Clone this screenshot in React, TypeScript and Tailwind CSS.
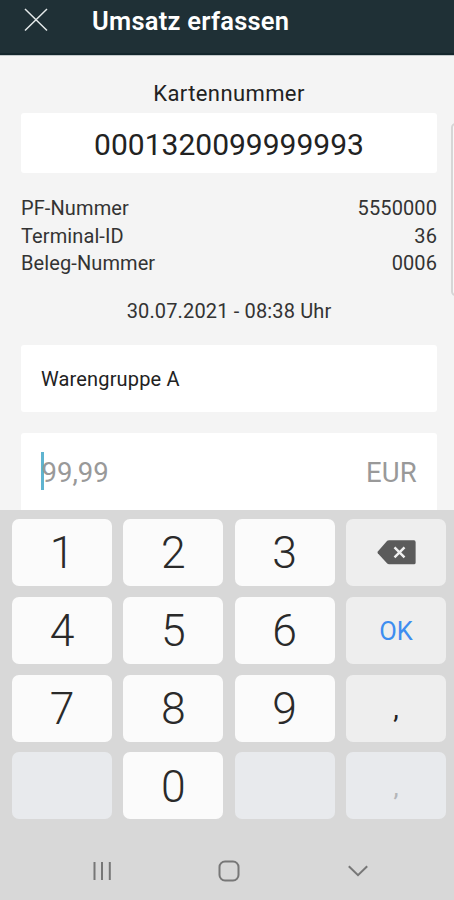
import clsx from "clsx";

type DetailRowProps = {
  label: string;
  value: string;
};

const DetailRow = ({ label, value }: DetailRowProps) => {
  return (
    <div className="flex justify-between">
      <span className="tracking-[0.1px]">{label}</span>
      <span className="tracking-[0.1px]">{value}</span>
    </div>
  );
};

type KeyVariant = "digit" | "action" | "disabled";

type KeypadKey = {
  id: string;
  label: string;
  variant: KeyVariant;
};

const KEYS: KeypadKey[] = [
  { id: "1", label: "1", variant: "digit" },
  { id: "2", label: "2", variant: "digit" },
  { id: "3", label: "3", variant: "digit" },
  { id: "backspace", label: "", variant: "action" },
  { id: "4", label: "4", variant: "digit" },
  { id: "5", label: "5", variant: "digit" },
  { id: "6", label: "6", variant: "digit" },
  { id: "ok", label: "OK", variant: "action" },
  { id: "7", label: "7", variant: "digit" },
  { id: "8", label: "8", variant: "digit" },
  { id: "9", label: "9", variant: "digit" },
  { id: "comma", label: ",", variant: "action" },
  { id: "blank-left", label: "", variant: "disabled" },
  { id: "0", label: "0", variant: "digit" },
  { id: "blank-right", label: "", variant: "disabled" },
  { id: "comma-disabled", label: ",", variant: "disabled" },
];

const BackspaceIcon = () => (
  <svg width="39" height="25" viewBox="0 0 39 25" className="ml-px">
    <path
      d="M10.2.8Q11 .3 12 .3H37Q38.6.3 38.6 1.900V22.700Q38.6 24.300 37 24.300H12Q11 24.300 10.200 23.500L.8 13.200Q.2 12.300.8 11.400Z"
      fill="#5b5b5b"
    />
    <path d="M17.500 7.300L27.500 17.300M27.500 7.300L17.500 17.300" stroke="#f0f0f0" strokeWidth="2.400" />
  </svg>
);

const Key = ({ id, label, variant }: KeypadKey) => {
  return (
    <button
      className={clsx(
        "flex h-[67px] items-center justify-center rounded-[7px]",
        variant === "digit" && "bg-[#fbfbfb] pt-[2px] text-[44.500px] font-light text-[#2a2a2a]",
        variant === "action" && "bg-[#eeeeee]",
        variant === "disabled" && "bg-[#e8eaed]",
        id === "ok" && "pt-[2px] text-[25.500px] text-[#3d8df0]",
        id === "comma" && "pt-[2px] text-[28px] text-[#222]",
        id === "comma-disabled" && "pt-[4px] text-[26px] text-[#b4b6b9]",
      )}
    >
      {id === "backspace" ? <BackspaceIcon /> : label}
    </button>
  );
};

const NavigationBar = () => (
  <div className="mt-[37px] flex h-[30px] items-center">
    <svg width="20" height="20" viewBox="0 0 20 20" className="ml-[92px]">
      <path d="M2.500 1V19M10 1V19M17.800 1V19" stroke="#777" strokeWidth="2" />
    </svg>
    <svg width="22" height="22" viewBox="0 0 22 22" className="ml-[106px]" fill="none">
      <rect x="1.500" y="1.500" width="19" height="19" rx="5.500" stroke="#777" strokeWidth="2" />
    </svg>
    <svg width="20" height="12" viewBox="0 0 20 12" className="ml-[108px]" fill="none">
      <path d="M.8 1.200L10 10.200L19.200 1.200" stroke="#777" strokeWidth="2" />
    </svg>
  </div>
);

const App = () => {
  return (
    <div className="relative flex h-[900px] w-[454px] flex-col overflow-hidden bg-[#f4f4f4] font-['Roboto',sans-serif] text-[#222]">
      <header className="flex h-[55px] shrink-0 border-b-2 border-[#14262c] bg-[#1f3036] text-white">
        <svg width="24" height="24" viewBox="0 0 24 24" className="mt-2 ml-6" fill="none">
          <path d="M1 1L23 22.500M23 1L1 22.500" stroke="#e4e9ea" strokeWidth="1.500" />
        </svg>
        <h1 className="mt-[5px] ml-[44px] text-[25.500px] leading-8 font-semibold tracking-[0.250px]">
          Umsatz erfassen
        </h1>
      </header>

      <main className="flex h-[455px] shrink-0 flex-col border-t border-[#c3c9cb] pt-[23px] pr-[17px] pl-[21px]">
        <p className="text-center text-[22px] leading-[30px] tracking-[0.4px]">Kartennummer</p>
        <div className="mt-[4px] flex h-[60px] shrink-0 items-center justify-center rounded-[3px] bg-white pt-[2px] text-[30px]">
          0001320099999993
        </div>
        <div className="mt-[22px] text-[20px] leading-[27.500px] text-[#333]">
          <DetailRow label="PF-Nummer" value="5550000" />
          <DetailRow label="Terminal-ID" value="36" />
          <DetailRow label="Beleg-Nummer" value="0006" />
        </div>
        <p className="mt-[19px] text-center text-[20px] leading-7 tracking-[0.150px] text-[#333]">
          30.07.2021 - 08:38 Uhr
        </p>
        <div className="mt-[20px] flex h-[67px] shrink-0 items-center rounded-[3px] bg-white px-5 pt-[2px] text-[20px] tracking-[0.150px]">
          Warengruppe A
        </div>
        <div className="mt-[21px] flex h-[77px] shrink-0 items-center rounded-t-[3px] bg-white px-5 text-[27.500px] text-[#999]">
          <span className="h-[38px] w-[2.500px] bg-[#5fb4d0]" />
          <span className="-ml-[2px] pt-[4px]">99,99</span>
          <span className="ml-auto pt-[4px] tracking-[0.2px]">EUR</span>
        </div>
      </main>

      <section className="flex-1 bg-[#d8d8d8] pt-[9px]">
        <div className="grid grid-cols-4 gap-x-[11.300px] gap-y-[10.800px] pr-2 pl-3">
          {KEYS.map((key) => (
            <Key key={key.id} {...key} />
          ))}
        </div>
        <NavigationBar />
      </section>

      {/* edge panel handle, cut off by the right side of the screen */}
      <div className="absolute top-[123px] -right-1.5 h-[173px] w-[9px] rounded-[5px] border-2 border-[#d6d6d6] bg-[#f8f8f8]" />
    </div>
  );
};

export default App;
